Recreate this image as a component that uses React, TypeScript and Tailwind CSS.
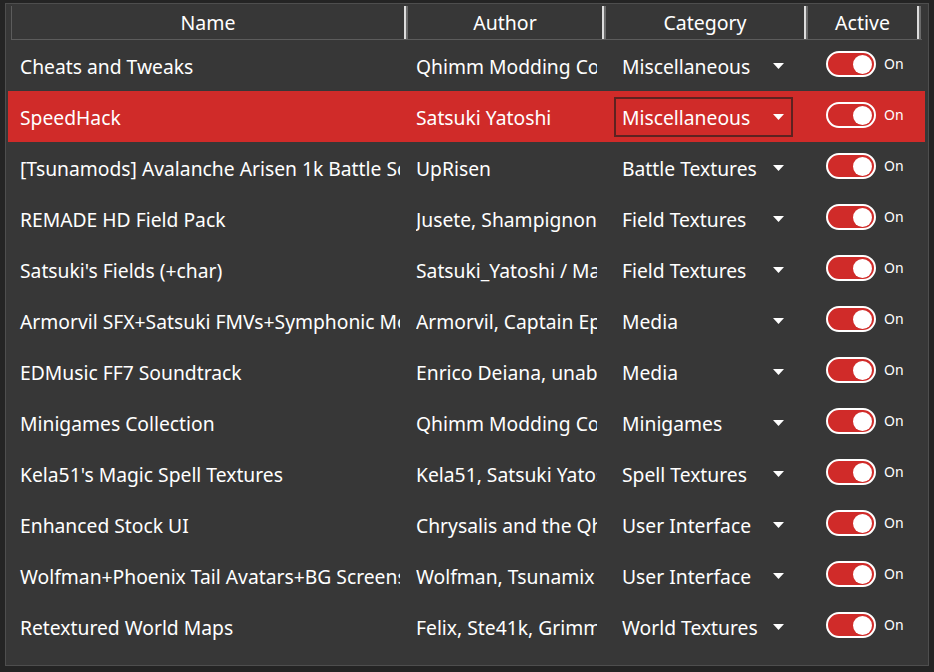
import React from 'react';

type Mod = {
  name: string;
  author: string;
  category: string;
};

const mods: Mod[] = [
  { name: 'Cheats and Tweaks', author: 'Qhimm Modding Community', category: 'Miscellaneous' },
  { name: 'SpeedHack', author: 'Satsuki Yatoshi', category: 'Miscellaneous' },
  { name: '[Tsunamods] Avalanche Arisen 1k Battle Scenes', author: 'UpRisen', category: 'Battle Textures' },
  { name: 'REMADE HD Field Pack', author: 'Jusete, Shampignon', category: 'Field Textures' },
  { name: "Satsuki's Fields (+char)", author: 'Satsuki_Yatoshi / Mako', category: 'Field Textures' },
  { name: 'Armorvil SFX+Satsuki FMVs+Symphonic Mod', author: 'Armorvil, Captain Epic', category: 'Media' },
  { name: 'EDMusic FF7 Soundtrack', author: 'Enrico Deiana, unabated', category: 'Media' },
  { name: 'Minigames Collection', author: 'Qhimm Modding Community', category: 'Minigames' },
  { name: "Kela51's Magic Spell Textures", author: 'Kela51, Satsuki Yatoshi', category: 'Spell Textures' },
  { name: 'Enhanced Stock UI', author: 'Chrysalis and the Qhimm community', category: 'User Interface' },
  { name: 'Wolfman+Phoenix Tail Avatars+BG Screens', author: 'Wolfman, Tsunamix', category: 'User Interface' },
  { name: 'Retextured World Maps', author: 'Felix, Ste41k, Grimmy', category: 'World Textures' },
];

const HeaderDivider = () => (
  <div className="flex h-full w-[4px] shrink-0">
    <div className="h-full w-[2px] bg-[#dcdcdc]" />
    <div className="h-full w-[2px] bg-[#6a6a6a]" />
  </div>
);

const Toggle = () => (
  <div className="flex items-center gap-[8px]">
    <div className="flex h-[26px] w-[50px] items-center justify-end rounded-full border-2 border-white bg-[#d02b29] pr-[2px]">
      <div className="h-[19px] w-[19px] rounded-full bg-white" />
    </div>
    <span className="text-[14px] leading-none">On</span>
  </div>
);

const Row = ({ mod, selected }: { mod: Mod; selected: boolean }) => (
  <div className={`flex h-[51px] w-[917px] items-center ${selected ? 'bg-[#d02b29]' : ''}`}>
    {/* Name */}
    <div className="w-[392px] shrink-0 overflow-hidden whitespace-nowrap pl-[12px] pt-[4px]">{mod.name}</div>
    <div className="w-[6px] shrink-0" />
    {/* Author */}
    <div className="w-[200px] shrink-0 pl-[10px] pr-[9px] pt-[4px]">
      <div className="overflow-hidden whitespace-nowrap">{mod.author}</div>
    </div>
    {/* Category */}
    <div className="w-[202px] shrink-0 pl-[8px]">
      <div
        className={`flex h-[40px] w-[179px] items-center justify-between border-2 pl-[6px] pr-[7px] ${
          selected ? 'border-[#5e2220]' : 'border-transparent'
        }`}
      >
        <span className="whitespace-nowrap pt-[3px]">{mod.category}</span>
        <svg width="11" height="6" viewBox="0 0 11 6" className="mt-[1px]">
          <path d="M0 0 L11 0 L5.5 6 Z" fill="#ffffff" />
        </svg>
      </div>
    </div>
    {/* Active */}
    <div className="flex shrink-0 pb-[3px] pl-[18px]">
      <Toggle />
    </div>
  </div>
);

export default function App() {
  return (
    <div
      className="h-[672px] w-[934px] overflow-hidden bg-[#242424] pl-[5px] pt-[3px] text-white"
      style={{ fontFamily: '"Noto Sans", "Open Sans", sans-serif' }}
    >
      <div className="h-[663px] w-[924px] border border-[#4e4e4e] bg-[#373737] pl-[2px] pt-[2px]">
        {/* Header */}
        <div className="ml-[3px] flex h-[34px] w-[911px] border-b border-l border-[#5c5c5c] text-[19.5px]">
          <div className="flex w-[392px] shrink-0 items-center justify-center">Name</div>
          <HeaderDivider />
          <div className="flex w-[194px] shrink-0 items-center justify-center">Author</div>
          <HeaderDivider />
          <div className="flex w-[198px] shrink-0 items-center justify-center">Category</div>
          <HeaderDivider />
          <div className="flex w-[109px] shrink-0 items-center justify-center">Active</div>
          <HeaderDivider />
        </div>
        {/* Rows */}
        <div className="text-[19.3px]">
          {mods.map((mod, i) => (
            <Row key={mod.name} mod={mod} selected={i === 1} />
          ))}
        </div>
      </div>
    </div>
  );
}
